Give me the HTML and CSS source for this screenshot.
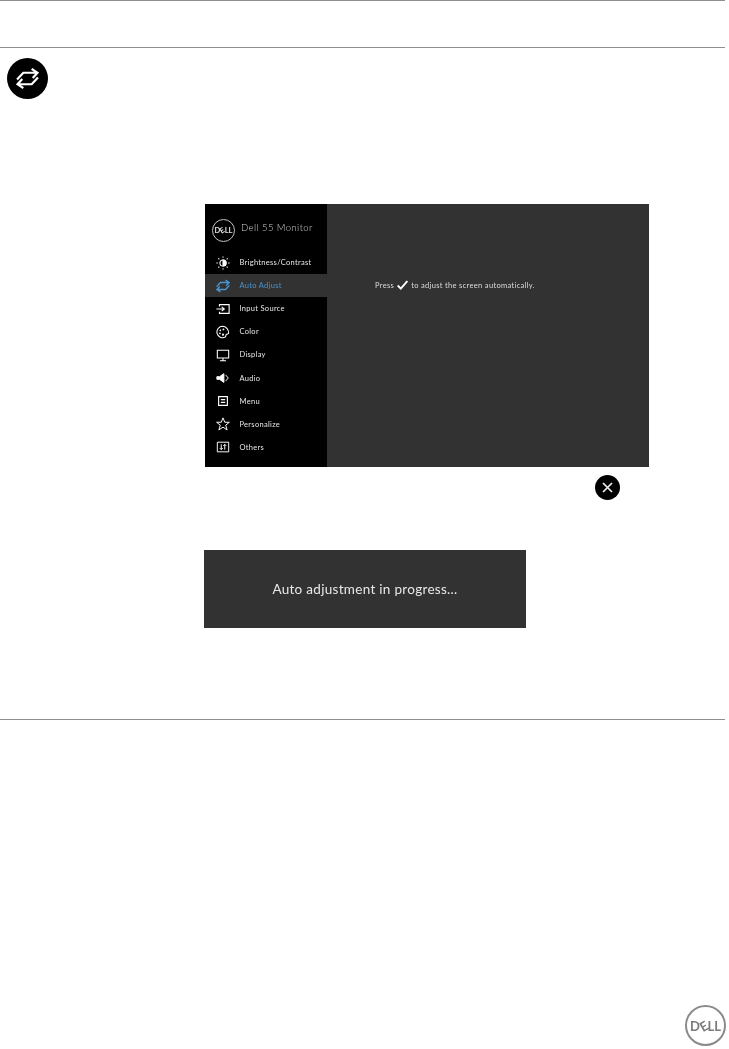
FILE: index.html
```html
<!DOCTYPE html>
<html lang="en">

<head>
    <meta charset="UTF-8">
    <title>Auto Adjust</title>
    <link rel="stylesheet" href="styles.css">
</head>

<body>
    <div class="page">
        <!-- Section header, empty in this row -->
        <div class="section-head"></div>

        <div class="section-body">
            <span class="step-icon">
                <svg width="23" height="21" viewBox="0 0 22 20" fill="none" stroke="#fff" stroke-width="2.1">
                    <path d="M1 11 L7 4.5 H20.5 M15 0.8 L20.5 4.5 L16 9.5" />
                    <path d="M21 9 L15 15.5 H1.5 M7 19.2 L1.5 15.5 L6 10.500" />
                </svg>
            </span>

            <!-- Monitor menu -->
            <div class="osd">
                <div class="osd-side">
                    <div class="osd-brand">
                        <span class="dell-badge"><span class="dell-word">D<i>E</i>LL</span></span>
                        <span class="osd-title">Dell 55 Monitor</span>
                    </div>
                    <ul class="osd-menu">
                        <li class="osd-item">
                            <svg class="osd-icon" viewBox="0 0 16 16" fill="none" stroke="#fff" stroke-width="1.2">
                                <path d="M8 4.5a3.5 3.5 0 0 1 0 7z" fill="#fff" />
                                <circle cx="8" cy="8" r="3.5" />
                                <path d="M8 0.5v1.6M8 13.9v1.6M0.5 8h1.6M13.9 8h1.6M2.7 2.7l1.1 1.1M12.2 12.2l1.1 1.1M2.7 13.3l1.1-1.1M12.2 3.8l1.1-1.1" />
                            </svg>
                            <span class="osd-label">Brightness/Contrast</span>
                        </li>
                        <li class="osd-item active">
                            <svg class="osd-icon" viewBox="0 0 22 20" fill="none" stroke="#4b94d0" stroke-width="2.2">
                                <path d="M1 11 L7 4.5 H20.5 M15 0.8 L20.5 4.5 L16 9.5" />
                                <path d="M21 9 L15 15.5 H1.5 M7 19.2 L1.5 15.5 L6 10.5" />
                            </svg>
                            <span class="osd-label">Auto Adjust</span>
                        </li>
                        <li class="osd-item">
                            <svg class="osd-icon" viewBox="0 0 16 16" fill="none" stroke="#fff" stroke-width="1.3">
                                <path d="M4 5V3h11v10H4v-2" />
                                <path d="M0.5 8h8M6.5 5.5 9.5 8l-3 2.5" />
                            </svg>
                            <span class="osd-label">Input Source</span>
                        </li>
                        <li class="osd-item">
                            <svg class="osd-icon" viewBox="0 0 16 16" fill="none" stroke="#fff" stroke-width="1.2">
                                <path d="M7.5 1.5a6.5 6.5 0 1 0 3 12.3c1.2-.7.4-2.2 1.3-3 .8-.7 2.7-.2 2.7-1.6 0-4-3-7.7-7-7.7z" />
                                <circle cx="5" cy="6" r="1" fill="#fff" stroke="none" />
                                <circle cx="8.5" cy="5" r="1" fill="#fff" stroke="none" />
                                <circle cx="4.5" cy="9.5" r="1" fill="#fff" stroke="none" />
                                <circle cx="8" cy="11" r="1.2" fill="#fff" stroke="none" />
                            </svg>
                            <span class="osd-label">Color</span>
                        </li>
                        <li class="osd-item">
                            <svg class="osd-icon" viewBox="0 0 16 16" fill="none" stroke="#fff" stroke-width="1.2">
                                <path d="M1.5 2.5h13v9h-13zM8 11.5v2.5M4.5 14.5h7" />
                            </svg>
                            <span class="osd-label">Display</span>
                        </li>
                        <li class="osd-item">
                            <svg class="osd-icon" viewBox="0 0 16 16" fill="none" stroke="#fff" stroke-width="1.1">
                                <path d="M1 6.5h3L9 3v10L4 9.5H1z" fill="#fff" />
                                <path d="M11 4.5 14 8l-3 3.5" />
                            </svg>
                            <span class="osd-label">Audio</span>
                        </li>
                        <li class="osd-item">
                            <svg class="osd-icon" viewBox="0 0 16 16" fill="none" stroke="#fff" stroke-width="1.3">
                                <path d="M3 3h10v10H3zM5.5 6.5h5M5.5 9.5h5" />
                            </svg>
                            <span class="osd-label">Menu</span>
                        </li>
                        <li class="osd-item">
                            <svg class="osd-icon" viewBox="0 0 16 16" fill="none" stroke="#fff" stroke-width="1.1">
                                <path d="M8 1 10 6h5.3l-4.200 3.300 1.600 5.500L8 11.600l-4.700 3.200 1.600-5.500L.7 6H6z" />
                            </svg>
                            <span class="osd-label">Personalize</span>
                        </li>
                        <li class="osd-item">
                            <svg class="osd-icon" viewBox="0 0 16 16" fill="none" stroke="#fff" stroke-width="1.1">
                                <path d="M1.5 2.5h13v11h-13zM6 5v6M4.300 9.200 6 11l1.700-1.800M10 11V5M8.300 6.800 10 5l1.700 1.800" />
                            </svg>
                            <span class="osd-label">Others</span>
                        </li>
                    </ul>
                </div>
                <div class="osd-main">
                    <p class="osd-hint">
                        <span>Press</span>
                        <svg class="hint-check" width="11" height="10" viewBox="0 0 11 10" fill="none" stroke="#fff" stroke-width="1.9">
                            <path d="M0.7 5.5 3.800 8.600 10.300 1" />
                        </svg>
                        <span>to adjust the screen automatically.</span>
                    </p>
                </div>
            </div>

            <div class="close-row">
                <span class="close-btn">
                    <svg width="11" height="11" viewBox="0 0 11 11" stroke="#eee" stroke-width="1.7">
                        <path d="M1 1 10 10M10 1 1 10" />
                    </svg>
                </span>
            </div>

            <div class="progress-box"><span class="progress-text">Auto adjustment in progress...</span></div>
        </div>

        <div class="page-foot">
            <span class="foot-logo"><span class="foot-word">D<i>E</i>LL</span></span>
        </div>
    </div>
</body>

</html>
```

FILE: styles.css
```css
/* General page styling */
body,
html {
    margin: 0;
    padding: 0;
    background-color: white;
    font-family: Lato, "Open Sans", sans-serif;
}

.page {
    height: 1049px;
    width: 729px;
    display: flex;
    flex-direction: column;
    overflow: hidden;
}

.section-head {
    width: 725px;
    height: 48px;
    border-top: 1px solid #8f8f8f;
    border-bottom: 1px solid #8f8f8f;
    box-sizing: border-box;
}

.section-body {
    width: 725px;
    height: 672px;
    border-bottom: 1px solid #8f8f8f;
    padding-top: 10px;
    box-sizing: border-box;
}

.step-icon {
    margin-left: 7px;
    width: 41px;
    height: 41px;
    border-radius: 50%;
    background-color: black;
    display: flex;
    align-items: center;
    justify-content: center;
}

/* Monitor menu */
.osd {
    display: flex;
    width: 444px;
    height: 263px;
    margin-top: 105px;
    margin-left: 205px;
    background-color: #313231;
}

.osd-side {
    width: 122px;
    background-color: black;
    color: #e6e6e6;
}

.osd-brand {
    display: flex;
    align-items: center;
    gap: 6px;
    height: 47px;
    padding-left: 7px;
    filter: blur(0.3px);
}

.dell-badge {
    width: 21px;
    height: 21px;
    margin-top: 6px;
    border: 1px solid #c4c4c4;
    border-radius: 50%;
    display: flex;
    align-items: center;
    justify-content: center;
}

.dell-word {
    font-size: 7.5px;
    font-weight: 700;
    color: #e0e0e0;
}

.dell-word i,
.foot-word i {
    display: inline-block;
    font-style: normal;
    transform: rotate(-30deg);
}

.osd-title {
    font-size: 9.5px;
    font-weight: 300;
    letter-spacing: 0.42px;
    color: #d0d0d0;
}

.osd-menu {
    list-style: none;
    margin: 0;
    padding: 0;
}

.osd-item {
    display: flex;
    align-items: center;
    height: 23.1px;
    padding-left: 11px;
    font-size: 7.5px;
    letter-spacing: 0.3px;
}

.osd-label {
    filter: blur(0.3px);
}

.osd-icon {
    width: 14px;
    height: 14px;
    margin-right: 9.5px;
    filter: blur(0.2px);
}

.osd-item.active {
    background-color: #313231;
    color: #4b94d0;
}

.osd-main {
    flex: 1;
}

.osd-hint {
    margin: 76px 0 0 48px;
    font-size: 7.5px;
    letter-spacing: 0.33px;
    color: #dcdcdc;
    display: flex;
    align-items: center;
    gap: 3px;
    filter: blur(0.3px);
}

.close-row {
    display: flex;
    justify-content: flex-end;
    width: 620px;
    margin-top: 8px;
}

.close-btn {
    width: 25px;
    height: 25px;
    border-radius: 50%;
    background-color: black;
    display: flex;
    align-items: center;
    justify-content: center;
}

.progress-box {
    width: 322px;
    height: 78px;
    margin-top: 50px;
    margin-left: 204px;
    background-color: #323232;
    color: #e8e8e8;
    font-size: 13.5px;
    letter-spacing: 0.3px;
    display: flex;
    align-items: center;
    justify-content: center;
}

.progress-text {
    filter: blur(0.25px);
}

/* Footer logo */
.page-foot {
    flex: 1;
    display: flex;
    justify-content: flex-end;
    align-items: flex-end;
    padding-right: 3px;
    padding-bottom: 3px;
}

.foot-logo {
    width: 37px;
    height: 37px;
    border: 2px solid #8a8a8a;
    border-radius: 50%;
    display: flex;
    align-items: center;
    justify-content: center;
    filter: blur(0.3px);
}

.foot-word {
    font-size: 13px;
    font-weight: 700;
    color: #7a7a7a;
}
```
